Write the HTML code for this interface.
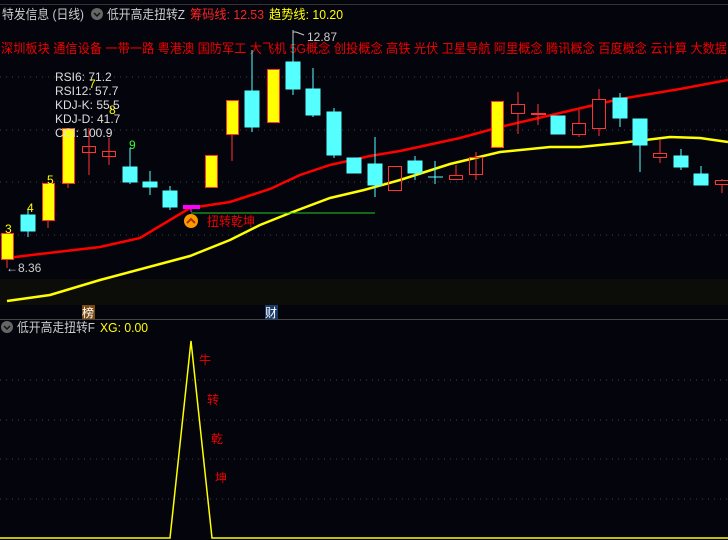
<!DOCTYPE html>
<html><head><meta charset="utf-8"><style>
body{margin:0;background:#04040c;width:728px;height:540px;overflow:hidden;font-family:"Liberation Sans","Noto Sans CJK SC",sans-serif}
svg{display:block}
</style></head><body>
<svg width="728" height="540" xmlns="http://www.w3.org/2000/svg" font-family="Liberation Sans, Noto Sans CJK SC, sans-serif">
<rect width="728" height="540" fill="#04040c"/>
<line x1="0" y1="4.5" x2="728" y2="4.5" stroke="#333"/>
<g stroke="#444" stroke-dasharray="1,5">
<line x1="0" y1="77" x2="728" y2="77"/><line x1="0" y1="130" x2="728" y2="130"/><line x1="0" y1="182" x2="728" y2="182"/><line x1="0" y1="235" x2="728" y2="235"/>
<line x1="0" y1="380" x2="728" y2="380"/><line x1="0" y1="420" x2="728" y2="420"/><line x1="0" y1="459" x2="728" y2="459"/><line x1="0" y1="499" x2="728" y2="499"/>
</g>
<rect x="0" y="279" width="728" height="26" fill="#0c0c08"/>
<line x1="0" y1="319.5" x2="728" y2="319.5" stroke="#444"/>
<!-- header -->
<text x="2" y="19" font-size="13" fill="#ccc" textLength="82" lengthAdjust="spacingAndGlyphs">特发信息 (日线)</text>
<circle cx="97" cy="14" r="6" fill="#666"/><path d="M94 13l3 3 3-3" stroke="#111" stroke-width="1.5" fill="none"/>
<text x="107" y="19" font-size="13" fill="#ccc" textLength="78" lengthAdjust="spacingAndGlyphs">低开高走扭转Z</text>
<text x="190" y="19" font-size="13" fill="#f22" textLength="74" lengthAdjust="spacingAndGlyphs">筹码线: 12.53</text>
<text x="269" y="19" font-size="13" fill="#ff0" textLength="74" lengthAdjust="spacingAndGlyphs">趋势线: 10.20</text>
<text x="1" y="53" font-size="13" fill="#e00" textLength="726" lengthAdjust="spacingAndGlyphs">深圳板块 通信设备 一带一路 粤港澳 国防军工 大飞机 5G概念 创投概念 高铁 光伏 卫星导航 阿里概念 腾讯概念 百度概念 云计算 大数据</text>
<!-- MA lines -->
<polyline fill="none" stroke="#f00" stroke-width="2.5" points="7,258 40,254 100,247 140,238 190,208 230,202 270,189 300,175 330,165 370,156 400,151 460,138 500,127 560,113 620,99 680,89 728,80"/>
<polyline fill="none" stroke="#ff0" stroke-width="2.5" points="7,301 50,295 100,280 190,256 230,240 260,225 290,213 330,198 364,190 400,180 450,164 500,152 550,147 580,147 620,143 670,137 700,138 728,142"/>
<line x1="191" y1="213" x2="375" y2="213" stroke="#2c2"/>
<!-- candles -->
<g stroke="#f33" stroke-width="1">
<line x1="7" y1="233" x2="7" y2="268"/><rect x="1.5" y="233.5" width="12" height="26" fill="#ff0"/>
<line x1="48" y1="183" x2="48" y2="228"/><rect x="42.5" y="183.5" width="12" height="37" fill="#ff0"/>
<line x1="68" y1="128" x2="68" y2="188"/><rect x="62.5" y="128.5" width="12" height="55" fill="#ff0"/>
<line x1="89" y1="128" x2="89" y2="175"/><rect x="82.5" y="146.5" width="13" height="6" fill="none"/>
<line x1="109" y1="138" x2="109" y2="165"/><rect x="102.5" y="151.5" width="13" height="5" fill="none"/>
<line x1="211" y1="155" x2="211" y2="188"/><rect x="205.5" y="155.5" width="12" height="32" fill="#ff0"/>
<line x1="232" y1="100" x2="232" y2="161"/><rect x="226.5" y="100.5" width="12" height="34" fill="#ff0"/>
<rect x="267.5" y="69.5" width="12" height="53" fill="#ff0"/>
<rect x="388.5" y="166.5" width="13" height="24" fill="none"/>
<line x1="456" y1="165" x2="456" y2="175"/><rect x="449.5" y="175.5" width="13" height="4" fill="none"/>
<line x1="476" y1="152" x2="476" y2="180"/><rect x="469.5" y="157.5" width="13" height="17" fill="none"/>
<rect x="491.5" y="101.5" width="12" height="46" fill="#ff0"/>
<line x1="518" y1="92" x2="518" y2="134"/><rect x="511.5" y="104.5" width="13" height="9" fill="#04040c"/>
<line x1="538" y1="104" x2="538" y2="125"/><line x1="531" y1="114" x2="546" y2="114" stroke-width="2"/>
<line x1="579" y1="110" x2="579" y2="137"/><rect x="572.5" y="123.5" width="13" height="11" fill="#04040c"/>
<line x1="599" y1="89" x2="599" y2="136"/><rect x="592.5" y="99.5" width="13" height="29" fill="#04040c"/>
<line x1="660" y1="140" x2="660" y2="163"/><rect x="653.5" y="153.5" width="13" height="4" fill="#04040c"/>
<line x1="722" y1="179" x2="722" y2="193"/><rect x="715.5" y="180.5" width="13" height="4" fill="#04040c"/>
</g>
<g stroke="#5ff" fill="#5ff">
<line x1="28" y1="209" x2="28" y2="237"/><rect x="21" y="215" width="14" height="16"/>
<line x1="130" y1="148" x2="130" y2="184"/><rect x="123" y="167" width="14" height="15"/>
<line x1="150" y1="171" x2="150" y2="195"/><rect x="143" y="182" width="14" height="5"/>
<line x1="170" y1="186" x2="170" y2="210"/><rect x="163" y="191" width="14" height="16"/>
<line x1="252" y1="50" x2="252" y2="132"/><rect x="245" y="91" width="14" height="36"/>
<line x1="293" y1="30" x2="293" y2="95"/><rect x="286" y="62" width="14" height="27"/>
<line x1="313" y1="68" x2="313" y2="117"/><rect x="306" y="89" width="14" height="26"/>
<line x1="334" y1="108" x2="334" y2="158"/><rect x="327" y="112" width="14" height="43"/>
<rect x="347" y="158" width="14" height="15"/>
<line x1="375" y1="137" x2="375" y2="197"/><rect x="368" y="164" width="14" height="21"/>
<line x1="415" y1="156" x2="415" y2="180"/><rect x="408" y="161" width="14" height="12"/>
<line x1="435" y1="161" x2="435" y2="184"/><line x1="428" y1="177" x2="443" y2="177"/>
<rect x="551" y="116" width="14" height="18"/>
<line x1="620" y1="93" x2="620" y2="127"/><rect x="613" y="98" width="14" height="20"/>
<line x1="640" y1="119" x2="640" y2="172"/><rect x="633" y="119" width="14" height="26"/>
<line x1="681" y1="149" x2="681" y2="170"/><rect x="674" y="156" width="14" height="11"/>
<line x1="701" y1="166" x2="701" y2="185"/><rect x="694" y="174" width="14" height="11"/>
</g>
<line x1="191" y1="205" x2="191" y2="212" stroke="#f3f"/><rect x="183" y="205" width="17" height="4" fill="#f0f"/>
<!-- labels -->
<g font-size="12">
<text x="5" y="233" fill="#ff0">3</text><text x="27" y="212" fill="#ff0">4</text><text x="47" y="184" fill="#ff0">5</text>
<text x="89" y="88" fill="#ff0">7</text><text x="109" y="114" fill="#ff0">8</text><text x="129" y="149" fill="#3f3">9</text>
<text x="307" y="41" fill="#ccc">12.87</text><text x="6" y="272" fill="#ccc">←8.36</text>
</g>
<path d="M293 40V32h3M296 32l8 3" stroke="#ccc" fill="none"/>
<g font-size="12" fill="#ddd">
<text x="55" y="81">RSI6: 71.2</text><text x="55" y="95">RSI12: 57.7</text><text x="55" y="109">KDJ-K: 55.5</text><text x="55" y="123">KDJ-D: 41.7</text><text x="55" y="137">CCI: 100.9</text>
</g>
<circle cx="191" cy="221" r="7" fill="#f90"/><path d="M187 223l4-4 4 4" stroke="#a30" stroke-width="2" fill="none"/>
<text x="207" y="226" font-size="13" fill="#e00" textLength="48" lengthAdjust="spacingAndGlyphs">扭转乾坤</text>
<rect x="82" y="305" width="13" height="14" fill="#7a4a10"/><text x="82" y="317" font-size="12" fill="#fff">榜</text>
<rect x="265" y="305" width="13" height="14" fill="#1a3a6a"/><text x="265" y="317" font-size="12" fill="#fff">财</text>
<!-- bottom panel -->
<circle cx="7" cy="327" r="6" fill="#666"/><path d="M4 326l3 3 3-3" stroke="#111" stroke-width="1.5" fill="none"/>
<text x="17" y="332" font-size="13" fill="#ccc" textLength="78" lengthAdjust="spacingAndGlyphs">低开高走扭转F</text>
<text x="100" y="332" font-size="13" fill="#ff0" textLength="48" lengthAdjust="spacingAndGlyphs">XG: 0.00</text>
<polyline fill="none" stroke="#ff0" stroke-width="1.5" points="0,538 170,538 191,341 212,538 728,538"/>
<g font-size="12" fill="#e00"><text x="199" y="364">牛</text><text x="207" y="404">转</text><text x="211" y="443">乾</text><text x="215" y="482">坤</text></g>
</svg>
</body></html>
